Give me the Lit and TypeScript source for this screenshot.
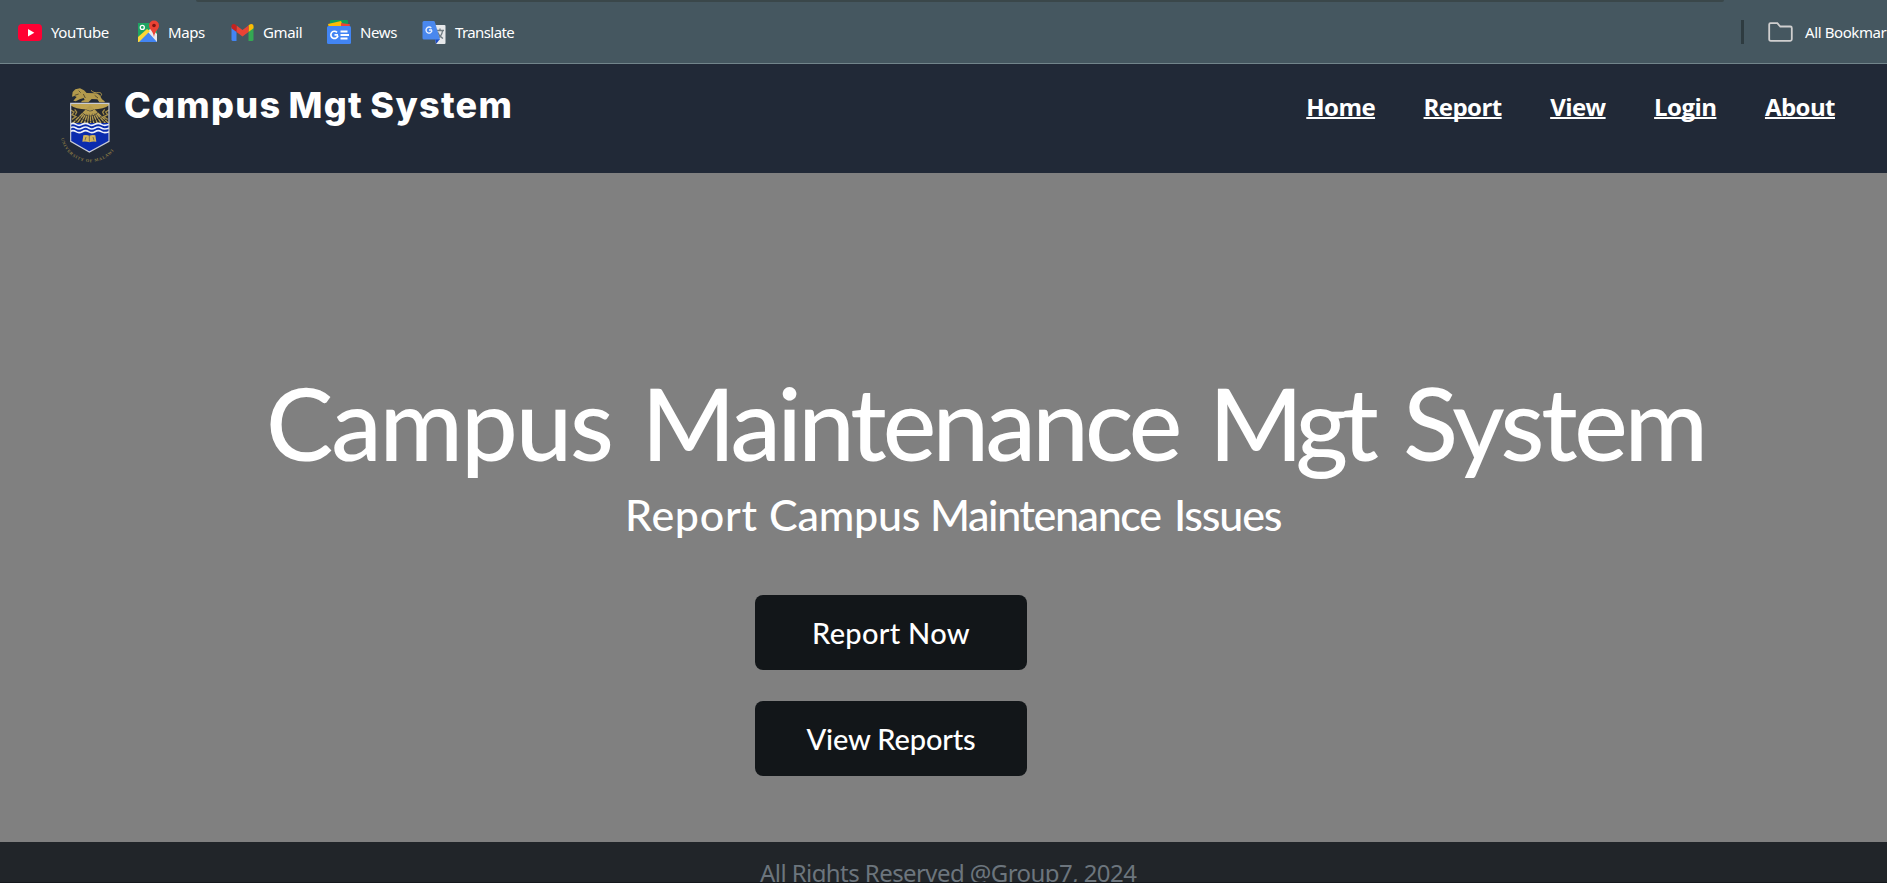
import { LitElement, html, css, svg } from "lit";
import { customElement } from "lit/decorators.js";

const icons = {
  youtube: svg`<rect x="0" y="4" width="24" height="17" rx="4" fill="#ff0033"/><path d="M10 9v7.4l6.3-3.7z" fill="#fff"/>`,
  maps: svg`<path d="M3 3h19v19H3z" fill="#1fa463"/><path d="M3 21L16 8l6 6v8H3z" fill="#e8eaed"/><path d="M3 22L13 12l9 10z" fill="#4285f4"/><path d="M3 17L12 9l3 2L4 22H3z" fill="#fdd835"/><circle cx="7.3" cy="7.4" r="2" fill="none" stroke="#fff" stroke-width="1.3"/><path d="M19 0.6a5 5 0 0 0-5 5c0 4 4 5 5 11.500c1-6.500 5-7.500 5-11.500a5 5 0 0 0-5-5z" fill="#ea4335"/><circle cx="19" cy="5.500" r="1.8" fill="#811411"/>`,
  gmail: svg`<path d="M1.500 7v12.500q0 1.500 1.500 1.500h3.500V10z" fill="#4285f4"/><path d="M18.500 10v11H22q1.500 0 1.500-1.500V7z" fill="#34a853"/><path d="M18.500 5.500V12l5-3.700V6.200c0-2.300-2.500-3-4.200-1.500z" fill="#fbbc04"/><path d="M6.500 12V5.500l6 4.600 6-4.600V12l-6 4.600z" fill="#ea4335"/><path d="M1.500 6.200v2.100l5 3.700V5.500l-.8-.8C4 3.200 1.500 3.900 1.500 6.200z" fill="#c5221f"/>`,
  news: svg`<path d="M4 0h16q1 0 1 1v6H3V1q0-1 1-1z" fill="#0f9d58"/><path d="M1 4L14 1l3 7H2z" fill="#fbbc04"/><path d="M14 3l9 1.200L22 9h-8z" fill="#ea4335"/><rect y="6" width="24" height="18" rx="1.500" fill="#4285f4"/><path d="M11 14.800H7.500M10 12.300A3.600 3.600 0 1 0 11 15.500" fill="none" stroke="#fff" stroke-width="1.700"/><path d="M13.500 11.500h7M13.500 15h8.500M13.500 18.500h7" stroke="#fff" stroke-width="1.800"/>`,
  translate: svg`<path d="M11 5h11.500q1 0 1 1v17q0 1-1 1H14z" fill="#e6e8ea"/><path d="M14 10.500h8M18 8.500v2M20.500 11c-.5 4-3 6.500-5.500 8M15.500 12c1 3 3 5 5.500 6.500" stroke="#6f7a80" stroke-width="1.300" fill="none"/><path d="M13 19h5l-4 5z" fill="#1a49c0"/><path d="M2 1h9.500q1 0 1.400 1L18 19.500H2q-1.500 0-1.500-1.500V2.500Q.5 1 2 1z" fill="#4a88ee"/><path d="M10 10H7M9.300 8.100A3 3 0 1 0 10 10.500" fill="none" stroke="#e8f0ff" stroke-width="1.400"/>`,
};

@customElement("app-root")
export class AppRoot extends LitElement {
  static styles = css`
    :host { display: block; height: 883px; overflow: hidden; font-family: "Open Sans", "Noto Sans", sans-serif; color: #fff; background: #808080; }
    * { box-sizing: border-box; }
    .page { display: flex; flex-direction: column; height: 883px; white-space: nowrap; }
    .bookmarks { position: relative; flex: none; height: 64px; display: flex; align-items: center; padding: 1px 0 0 18px; background: #455760; border-bottom: 1px solid #72858b; font: 15px/20px "Noto Sans", sans-serif; letter-spacing: -0.4px; overflow: hidden; }
    .tabedge { position: absolute; top: 0; left: 196px; width: 1528px; height: 2px; background: #3a474a; border-radius: 0 0 8px 8px; }
    .links { display: grid; grid-template-columns: 117px 95px 97px 95px auto; }
    .link { display: flex; align-items: center; gap: 9px; }
    .link svg { flex: none; width: 24px; height: 24px; }
    .link:last-child { letter-spacing: -0.6px; }
    .all { display: flex; align-items: center; margin-left: auto; width: 146px; }
    .rule { flex: none; width: 3px; height: 24px; background: #2e3b40; margin-right: 24px; }
    .all svg { flex: none; width: 25px; height: 20px; margin-right: 12px; }
    .nav { flex: none; height: 109px; background: #212937; display: flex; padding: 21px 52px 0 60px; }
    .logo { flex: none; width: 60px; height: 80px; }
    .brand { font: 800 36px/40px Inter, sans-serif; font-feature-settings: "cv11"; letter-spacing: 1.3px; word-spacing: -2px; margin: 0 0 0 4px; }
    .menu { display: flex; gap: 48.5px; margin-left: auto; font: 700 24px/32px "Open Sans", sans-serif; letter-spacing: -0.55px; padding-top: 6px; }
    .menu a { color: #fff; text-decoration: underline; text-decoration-thickness: 2px; text-underline-offset: 1px; text-decoration-skip-ink: none; }
    .hero { flex: none; height: 669px; font-family: Lato, sans-serif; display: flex; flex-direction: column; align-items: flex-start; }
    h1 { font-weight: 500; font-size: 101px; line-height: 120px; margin: 189px 0 0 266px; }
    h1 :nth-child(1) { letter-spacing: -2.1px; margin-right: 4.2px; }
    h1 :nth-child(2) { letter-spacing: -3.7px; margin-right: 5px; }
    h1 :nth-child(3) { letter-spacing: -6px; margin-right: 4.8px; }
    h1 :nth-child(4) { letter-spacing: -3.2px; }
    h2 { font-weight: 500; font-size: 43px; line-height: 52px; margin: 7px 0 0 625px; }
    h2 :nth-child(1) { letter-spacing: 0.7px; margin-right: 0.5px; }
    h2 :nth-child(2) { letter-spacing: -0.25px; margin-right: -1px; }
    h2 :nth-child(3) { letter-spacing: -1.4px; margin-right: 2.6px; }
    h2 :nth-child(4) { letter-spacing: -1.2px; }
    .btn { width: 272px; height: 75px; border: 0; border-radius: 8px; background: #121619; color: #fff; font: 500 29px/74px Lato, sans-serif; letter-spacing: -0.15px; margin: 0 0 31px 755px; padding: 0; text-align: center; }
    .first { margin-top: 54px; letter-spacing: 0.3px; }
    .footer { flex: none; height: 41px; overflow: hidden; background: #212529; border-bottom: 1px solid #15181c; color: #6c757d; font: 24px/34px "Noto Sans", sans-serif; letter-spacing: -0.57px; padding: 14px 0 0 760px; }
  `;

  private link(name: keyof typeof icons, label: string) {
    return html`<div class="link"><svg viewBox="0 0 24 24">${icons[name]}</svg><span>${label}</span></div>`;
  }

  render() {
    return html`<div class="page">
      <div class="bookmarks">
        <div class="tabedge"></div>
        <div class="links">
          ${this.link("youtube", "YouTube")}${this.link("maps", "Maps")}${this.link("gmail", "Gmail")}${this.link("news", "News")}${this.link("translate", "Translate")}
        </div>
        <div class="all">
          <div class="rule"></div>
          <svg viewBox="0 0 25 20"><path d="M2.500 1.200h6.800l3 3.300h10q1.500 0 1.500 1.500v11.300q0 1.500-1.500 1.500H2.700q-1.500 0-1.500-1.500V2.500q0-1.300 1.300-1.300z" fill="none" stroke="#d0cfcf" stroke-width="1.800"/></svg>
          <span>All Bookmarks</span>
        </div>
      </div>
      <nav class="nav">
        <svg class="logo" viewBox="60 45 180 240">
          <defs>
            <path id="arc" d="M63 205A89.700 89.700 0 0 0 240 196"/>
            <clipPath id="shield"><path d="M92 100H207V214L148 246L92 214Z"/></clipPath>
          </defs>
          <g fill="#b39a4c">
            <path d="M98 66l8-8 14-3 12 6 8 8 28 1 10 4 8 14 8 6v3h-16l-6-9-17-1-10 10h-22l3-5 8-2-3-6-12 4-12 6-7-2 10-11-6-3-8 2z"/>
            <path d="M178 80c12-4 6-14-3-12s-18-2-22-7" fill="none" stroke="#b39a4c" stroke-width="3"/>
          </g>
          <path d="M116 62l6 6M104 76l12-4M130 72l6 12M164 76l10 8" stroke="#4a432c" stroke-width="2.500"/>
          <g clip-path="url(#shield)">
            <rect x="90" y="98" width="120" height="64" fill="#25282f"/>
            <path d="M92 98H207V106Q190 120 150 118Q108 120 92 106Z" fill="#c0a452"/>
            <path d="M150 108L96 162M150 108L109 162M150 108L121 162M150 108L132 162M150 108L142 162M150 108L152 162M150 108L162 162M150 108L173 162M150 108L185 162M150 108L198 162M150 108L209 162" stroke="#b69d50" stroke-width="4" stroke-dasharray="14 1.500"/>
            <path d="M92 120l10 6-6 8 12 6-12 8M104 118l6 8-4 8M207 120l-10 6 6 8-12 6 12 8M194 118l-6 8 4 8" stroke="#a38c46" stroke-width="4" fill="none"/>
            <rect x="90" y="159" width="120" height="90" fill="#0b2cae"/>
            <path d="M90 163q9-6 18 0t19 0 19 0 19 0 19 0 24 0M90 174q9-6 18 0t19 0 19 0 19 0 19 0 24 0M90 185q9-6 18 0t19 0 19 0 19 0 19 0 24 0" fill="none" stroke="#eef1fa" stroke-width="5"/>
          </g>
          <path d="M92 100H207V214L148 246L92 214Z" fill="none" stroke="#c9ccd6" stroke-width="3.500"/>
          <path d="M130 196q9-3 18 1q9-4 18-1l3 19q-11-2-21 2q-10-4-21-2z" fill="#d3b45a"/>
          <path d="M148 197v18M138 201l-3 10M159 201l3 10" stroke="#4b4a58" stroke-width="2"/>
          <text font-family="Liberation Serif" font-size="13" font-weight="700" letter-spacing="2.200" fill="#8a7a45"><textPath href="#arc">UNIVERSITY OF MALAWI</textPath></text>
        </svg>
        <h3 class="brand">Campus Mgt System</h3>
        <div class="menu">${["Home", "Report", "View", "Login", "About"].map((t) => html`<a>${t}</a>`)}</div>
      </nav>
      <main class="hero">
        <h1><span>Campus</span> <span>Maintenance</span> <span>Mgt</span> <span>System</span></h1>
        <h2><span>Report</span> <span>Campus</span> <span>Maintenance</span> <span>Issues</span></h2>
        <button class="btn first">Report Now</button>
        <button class="btn">View Reports</button>
      </main>
      <footer class="footer">All Rights Reserved @Group7, 2024</footer>
    </div>`;
  }
}
